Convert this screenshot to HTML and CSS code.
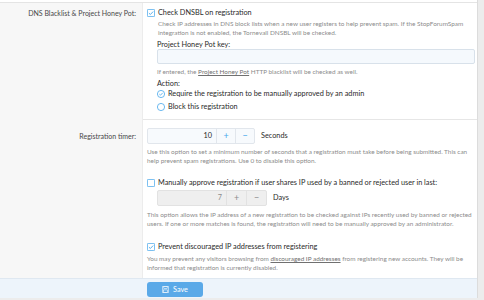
FILE: index.html
```html
<!DOCTYPE html>
<html lang="en">
<head>
    <meta charset="UTF-8">
    <title>Registration options</title>
    <link rel="stylesheet" href="styles.css">
</head>
<body>
<div class="block">
	<div class="form-row first-row">
		<div class="row-label">DNS Blacklist &amp; Project Honey Pot:</div>
		<div class="row-input">
			<label class="choice">
				<svg class="box-icon" viewBox="0 0 10 10"><rect x="0.5" y="0.5" width="9" height="9" rx="1" fill="#fff" stroke="#47a7eb"/><path d="M2.4 5.1 L4.2 6.9 L7.7 3.2" fill="none" stroke="#47a7eb" stroke-width="1.1"/></svg>
				<span>Check DNSBL on registration</span>
			</label>
			<div class="hint dnsbl-hint">Check IP addresses in DNS block lists when a new user registers to help prevent spam. If the StopForumSpam integration is not enabled, the Tornevall DNSBL will be checked.</div>
			<div class="dependent">
				<div class="sub-label">Project Honey Pot key:</div>
				<div class="text-input"></div>
				<div class="hint key-hint">If entered, the <u>Project Honey Pot</u> HTTP blacklist will be checked as well.</div>
				<div class="sub-label action-label">Action:</div>
				<label class="choice radio-choice">
					<svg class="box-icon" viewBox="0 0 10 10"><circle cx="5" cy="5" r="4.5" fill="#fff" stroke="#47a7eb"/><path d="M2.9 5.1 L4.4 6.5 L7.1 3.6" fill="none" stroke="#47a7eb" stroke-width="1"/></svg>
					<span>Require the registration to be manually approved by an admin</span>
				</label>
				<label class="choice radio-choice">
					<svg class="box-icon" viewBox="0 0 10 10"><circle cx="5" cy="5" r="4.5" fill="#fff" stroke="#47a7eb"/></svg>
					<span>Block this registration</span>
				</label>
			</div>
		</div>
	</div>
	<div class="form-row timer-row">
		<div class="row-label">Registration timer:</div>
		<div class="row-input">
			<div class="spin-line">
				<div class="spin-box">
					<span class="spin-value">10</span>
					<span class="spin-btn">+</span>
					<span class="spin-btn">&minus;</span>
				</div>
				<span class="spin-units">Seconds</span>
			</div>
			<div class="hint">Use this option to set a minimum number of seconds that a registration must take before being submitted. This can help prevent spam registrations. Use 0 to disable this option.</div>

			<label class="choice approve-choice">
				<svg class="box-icon" viewBox="0 0 10 10"><rect x="0.5" y="0.5" width="9" height="9" rx="1" fill="#fff" stroke="#47a7eb"/></svg>
				<span>Manually approve registration if user shares IP used by a banned or rejected user in last:</span>
			</label>
			<div class="dependent">
				<div class="spin-line">
					<div class="spin-box disabled">
						<span class="spin-value">7</span>
						<span class="spin-btn">+</span>
						<span class="spin-btn">&minus;</span>
					</div>
					<span class="spin-units">Days</span>
				</div>
			</div>
			<div class="hint approve-hint">This option allows the IP address of a new registration to be checked against IPs recently used by banned or rejected users. If one or more matches is found, the registration will need to be manually approved by an administrator.</div>

			<label class="choice discourage-choice">
				<svg class="box-icon" viewBox="0 0 10 10"><rect x="0.5" y="0.5" width="9" height="9" rx="1" fill="#fff" stroke="#47a7eb"/><path d="M2.4 5.1 L4.2 6.9 L7.7 3.2" fill="none" stroke="#47a7eb" stroke-width="1.1"/></svg>
				<span>Prevent discouraged IP addresses from registering</span>
			</label>
			<div class="hint discourage-hint">You may prevent any visitors browsing from <u>discouraged IP addresses</u> from registering new accounts. They will be informed that registration is currently disabled.</div>
		</div>
	</div>
	<div class="submit-row">
		<button class="button-save">
			<svg class="save-icon" viewBox="0 0 10 10"><rect x="0.5" y="0.5" width="9" height="9" rx="0.8" fill="none" stroke="#fff" stroke-width="0.9"/><rect x="2.6" y="0.5" width="4.8" height="3" fill="none" stroke="#fff" stroke-width="0.8"/><rect x="2.3" y="5.6" width="5.4" height="3.9" fill="none" stroke="#fff" stroke-width="0.8"/></svg>
			<span>Save</span>
		</button>
	</div>
</div>
</body>
</html>
```

FILE: styles.css
```css
*{padding:0;margin:0;box-sizing:border-box;}
body{
	font-family:Lato,"Open Sans",sans-serif;
	font-size:7.3px;line-height:12px;
	color:#2a2a2a;
	background:#ececec;
}

.block{
	width:478px;
	background:#fff;
	border-right:1px solid #dcdcdc;
	padding-top:2px;
}
.form-row{
	display:grid;
	grid-template-columns:143px 1fr;
}
.first-row{border-top:1px solid #e4e4e4;}
.row-label{
	background:#f7f7f7;
	border-right:1px solid #ececec;
	text-align:right;
	padding:4px 6px 0 0;
	font-size:7px;
	color:#474747;
}
.timer-row .row-label{padding-top:10px;}
.row-input{padding:4px 2px 0 4px;}
.first-row .row-input{padding-bottom:7px;border-bottom:1px solid #e6e6e6;}
.timer-row .row-input{padding-top:8px;padding-bottom:6px;}

.choice{display:flex;align-items:center;gap:3px;height:12px;}
.box-icon{width:8px;height:8px;flex:none;}

.hint{
	font-size:6.4px;line-height:9px;
	color:#8c8c8c;
}
.hint u{color:#707070;}
.dnsbl-hint{padding:0 4px 0 11px;}
.dependent{padding-left:10px;}
.sub-label{margin-top:3px;line-height:10px;}
.text-input{
	height:15px;
	margin-top:-1px;
	background:#f5f9fd;
	border:1px solid #d8e1ea;
	border-radius:2px;
}
.key-hint{margin-top:3px;}
.action-label{margin-top:3px;}
.radio-choice{height:10px;}
.radio-choice + .radio-choice{margin-top:3px;}

.spin-line{display:flex;align-items:center;gap:6px;}
.spin-box{
	display:flex;
	width:108px;height:16px;
	border:1px solid #e1e6ec;
	border-radius:2px;
	background:#f7fafd;
}
.spin-value{flex:1;text-align:right;padding-right:4px;line-height:14px;}
.spin-btn{
	width:19px;
	border-left:1px solid #e1e6ec;
	text-align:center;
	color:#47a7eb;
	font-size:9px;
	line-height:14px;
}
.timer-row .hint{margin-top:3px;}
.approve-choice{margin-top:12px;}
.dependent .spin-line{margin-top:1px;}
.spin-box.disabled{width:110px;background:#efefef;border-color:#e2e2e2;}
.spin-box.disabled .spin-btn{width:20px;color:#8c8c8c;border-color:#e2e2e2;}
.spin-box.disabled .spin-value{color:#8c8c8c;}
.timer-row .approve-hint{margin-top:4px;}
.discourage-choice{margin-top:13px;}
.timer-row .discourage-hint{margin-top:1px;padding-right:10px;}

.submit-row{
	background:#edf4fb;
	border-top:1px solid #dfe8f1;
	height:20px;
	padding:3px 0 0 147px;
}
.button-save{
	display:flex;align-items:center;justify-content:center;gap:4px;
	width:56px;height:15px;
	border:0;border-radius:3px;
	background:#5aa9e8;
	color:#fff;
	font-family:inherit;font-size:7.3px;
}
.save-icon{width:7px;height:7px;}
```
